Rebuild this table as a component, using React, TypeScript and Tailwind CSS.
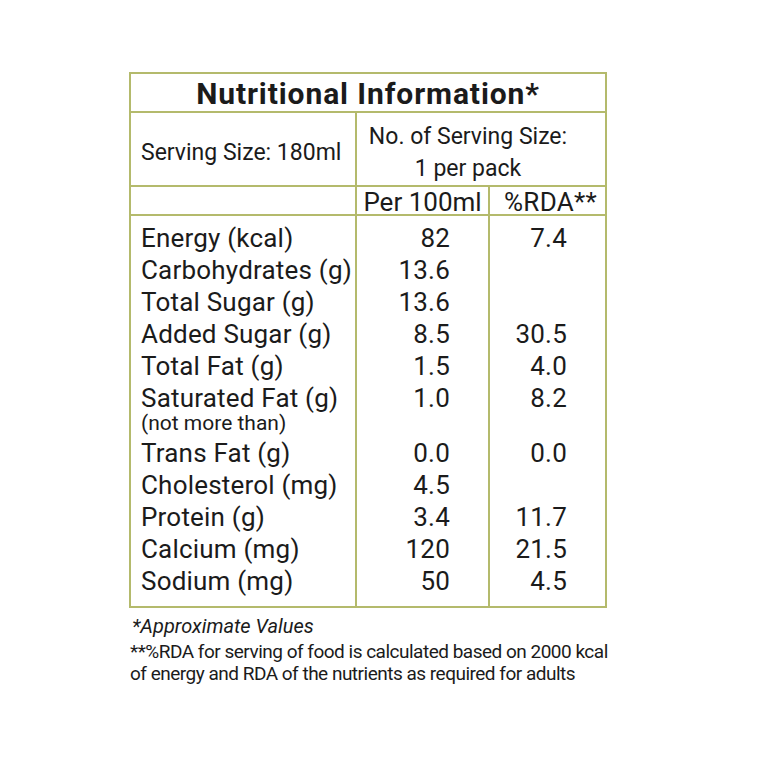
const rows = [
  { name: "Energy (kcal)", per: "82", rda: "7.4" },
  { name: "Carbohydrates (g)", per: "13.6", rda: "" },
  { name: "Total Sugar (g)", per: "13.6", rda: "" },
  { name: "Added Sugar (g)", per: "8.5", rda: "30.5" },
  { name: "Total Fat (g)", per: "1.5", rda: "4.0" },
  { name: "Saturated Fat (g)", per: "1.0", rda: "8.2", note: "(not more than)" },
  { name: "Trans Fat (g)", per: "0.0", rda: "0.0" },
  { name: "Cholesterol (mg)", per: "4.5", rda: "" },
  { name: "Protein (g)", per: "3.4", rda: "11.7" },
  { name: "Calcium (mg)", per: "120", rda: "21.5" },
  { name: "Sodium (mg)", per: "50", rda: "4.5" },
];

export default function App() {
  return (
    <div className="w-[764px] h-[764px] bg-white pt-[72px] pl-[129px] text-[#1b1b1b] font-[Roboto,sans-serif]">
      <div className="w-[478px] border-2 border-[#b4ba6c]">
        <div className="h-[39px] border-b-2 border-[#b4ba6c] flex items-center justify-center pt-[3px] text-[30px] font-bold leading-none tracking-[0.9px]">
          Nutritional Information*
        </div>

        <div className="grid grid-cols-[226px_1fr] h-[74px] border-b-2 border-[#b4ba6c] text-[23px] leading-[32px]">
          <div className="border-r-2 border-[#b4ba6c] flex items-center pl-[10px] pt-[8px]">Serving Size: 180ml</div>
          <div className="flex flex-col items-center justify-center pr-[26px] pt-[8px]">
            <span>No. of Serving Size:</span>
            <span>1 per pack</span>
          </div>
        </div>

        <div className="grid grid-cols-[226px_133px_1fr] h-[29px] border-b-2 border-[#b4ba6c] text-[26px] leading-none">
          <div className="border-r-2 border-[#b4ba6c]" />
          <div className="border-r-2 border-[#b4ba6c] flex items-center justify-center pt-[2px]">Per 100ml</div>
          <div className="flex items-center justify-center pl-[6px] pt-[2px] tracking-[0.3px]">%RDA**</div>
        </div>

        <div className="flex flex-col text-[26px] tracking-[0.2px]">
          {rows.map((r, i) => {
            const pad = `${i === 0 ? "pt-[6px]" : ""} ${i === rows.length - 1 ? "pb-[9px]" : ""}`;
            return (
              <div key={r.name} className="grid grid-cols-[226px_133px_1fr]">
                <div className={`border-r-2 border-[#b4ba6c] pl-[10px] flex flex-col ${pad}`}>
                  <span className="leading-[32px]">{r.name}</span>
                  {r.note && <span className="text-[21px] tracking-normal leading-[18px] mb-[5px]">{r.note}</span>}
                </div>
                <div className={`border-r-2 border-[#b4ba6c] text-right pr-[38px] leading-[32px] ${pad}`}>{r.per}</div>
                <div className={`text-right pr-[38px] leading-[32px] ${pad}`}>{r.rda}</div>
              </div>
            );
          })}
        </div>
      </div>

      <div className="w-[500px] mt-[6px] pl-[3px] text-[20px] leading-[24px] italic">*Approximate Values</div>
      <div className="w-[500px] pl-[1px] mt-[3px] text-[19px] leading-[22px] tracking-[-0.5px] whitespace-nowrap">
        <p>**%RDA for serving of food is calculated based on 2000 kcal</p>
        <p>of energy and RDA of the nutrients as required for adults</p>
      </div>
    </div>
  );
}
